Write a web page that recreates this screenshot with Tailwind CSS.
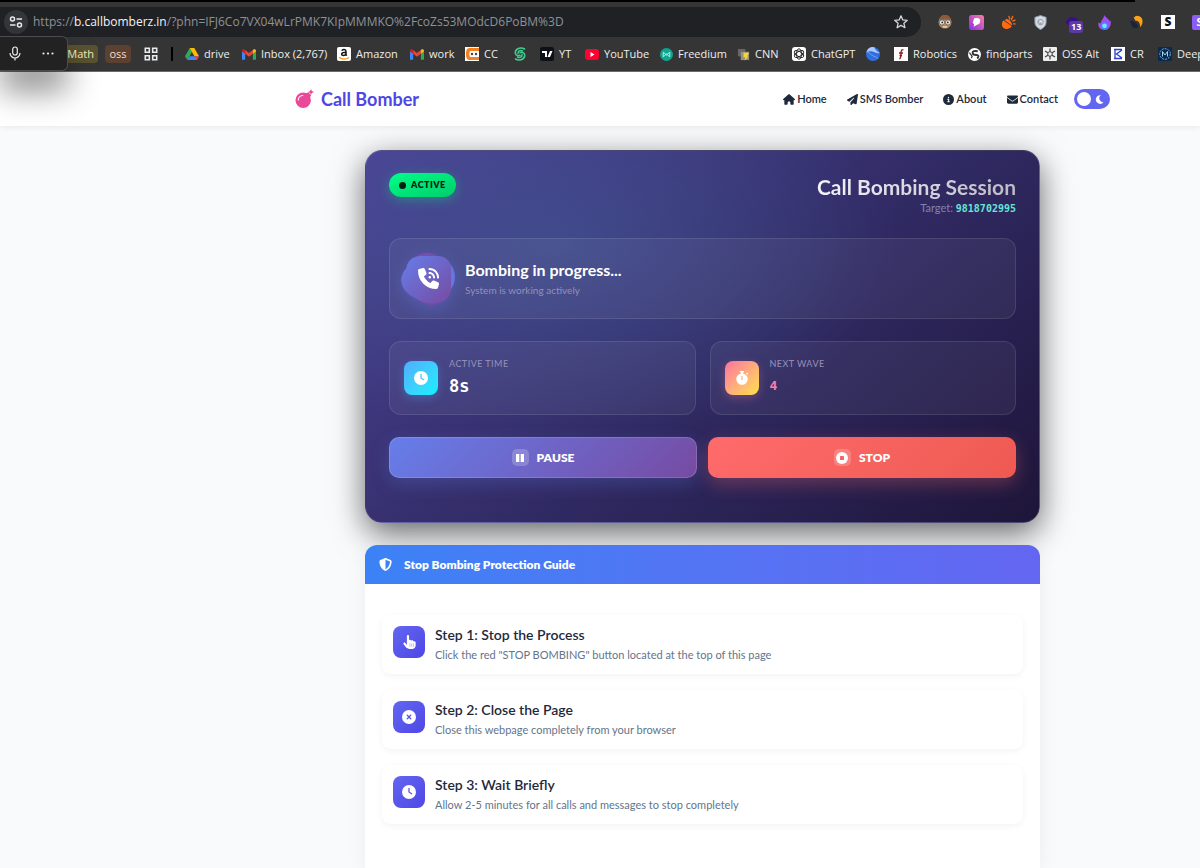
<!DOCTYPE html>
<html lang="en">
<head>
  <meta charset="UTF-8" />
  <meta name="viewport" content="width=device-width, initial-scale=1.0">
  <title>Call Bomber</title>

  <!-- Tailwind -->
  <script src="https://cdn.jsdelivr.net/npm/@tailwindcss/browser@4"></script>
</head>
<body class="min-h-screen flex flex-col overflow-x-hidden bg-[#f8fafc] font-['Lato','Liberation_Sans',sans-serif]">

  <!-- Shared icons -->
  <svg class="hidden" aria-hidden="true">
    <symbol id="clock" viewBox="0 0 512 512"><path d="M256 0a256 256 0 1 1 0 512A256 256 0 1 1 256 0zM232 120V256c0 8 4 15.500 10.700 20l96 64c11 7.400 25.900 4.400 33.300-6.700s4.400-25.900-6.700-33.300L280 243.200V120c0-13.300-10.700-24-24-24s-24 10.700-24 24z"/></symbol>
    <symbol id="gmail" viewBox="0 0 16 12"><path fill="#4285f4" d="M0 2v9a1 1 0 0 0 1 1h2.600V4.500z"/><path fill="#34a853" d="M12.400 12H15a1 1 0 0 0 1-1V2l-3.600 2.500z"/><path fill="#ea4335" d="M3.600 5.200V.8L8 4.200 12.400.8v4.400L8 8.600z"/><path fill="#c5221f" d="M0 1.800C0 .2 1.700-.5 3 .4l.6.4v4.400L0 2.600z"/><path fill="#fbbc04" d="M16 1.800C16 .2 14.300-.5 13 .4l-.6.4v4.400L16 2.600z"/></symbol>
  </svg>

  <!-- Browser chrome -->
  <div class="relative z-10 h-[72px] shrink-0 bg-[#353535] border-b border-[#6b6b6b] font-['Open_Sans','Noto_Sans',sans-serif]">
    <div class="h-[2px] bg-black mr-[65px]"></div>

    <!-- Address row -->
    <div class="flex items-center h-[40px] overflow-hidden">
      <div class="flex items-center h-[30px] w-[921px] shrink-0 rounded-r-full bg-[#202124] pl-1 pr-3">
        <button aria-label="Site information" class="flex items-center justify-center size-[24px] rounded-full bg-[#353638]">
          <svg class="size-[14px]" viewBox="0 0 14 14" fill="none" stroke="#e8eaed" stroke-width="1.500"><circle cx="3.500" cy="4" r="2"/><path d="M7.500 4H13M1 10h5.500"/><circle cx="10.500" cy="10" r="2"/></svg>
        </button>
        <div role="textbox" aria-label="Address" class="ml-[5px] flex-1 text-[12px] leading-[18px] whitespace-nowrap text-[#8f9296]">https://<span class="text-[#f1f3f4]">b.callbomberz.in</span>/?phn=IFJ6Co7VX04wLrPMK7KIpMMMKO%2FcoZs53MOdcD6PoBM%3D</div>
        <button aria-label="Bookmark this page">
          <svg class="size-[16px]" viewBox="0 0 16 16" fill="none" stroke="#d5d7da" stroke-width="1.300" stroke-linejoin="round"><path d="M8 1.800l1.800 4.100 4.500.4-3.400 3 1 4.400L8 11.400l-3.900 2.300 1-4.400-3.400-3 4.500-.4z"/></svg>
        </button>
      </div>

      <!-- Extensions -->
      <div class="flex items-center gap-[17px] ml-[17px] shrink-0">
        <svg class="size-[14px] shrink-0" viewBox="0 0 16 16"><circle cx="8" cy="8" r="7.500" fill="#b98762"/><path d="M1.500 6a6.500 6.500 0 0 1 13 0l-6.500-1z" fill="#8a5a3c"/><circle cx="4.500" cy="8.500" r="3" fill="#dff1ef" stroke="#6b5a4c"/><circle cx="11.500" cy="8.500" r="3" fill="#dff1ef" stroke="#6b5a4c"/><circle cx="4.800" cy="8.500" r="1" fill="#222"/><circle cx="11.200" cy="8.500" r="1" fill="#222"/><path d="M5.500 13.700h5" stroke="#f0d6c4" stroke-width="1.600"/></svg>
        <svg class="size-[15px] shrink-0" viewBox="0 0 16 16"><defs><linearGradient id="ext" x1="1" y1="0" x2="0" y2="1"><stop stop-color="#fb7fa0"/><stop offset="1" stop-color="#8b2be8"/></linearGradient></defs><rect width="16" height="16" rx="3" fill="url(#ext)"/><path d="M5.500 3.500Q12 2.500 12 6t-3.500 4.500L5 12.500l.5-3L4 8.500z" fill="#fff"/></svg>
        <svg class="size-[15px] shrink-0" viewBox="0 0 16 16"><path d="M2.500 5.500l9 6.500q-2 3.500-6 3Q1 14 1 10q0-3 1.500-4.500z" fill="#ff6a13"/><path d="M5 4.500q4-1 7 5.500l-1 .8-7-5.300z" fill="#ff6a13"/><path d="M8.500 1.500l.8 2.500M12.500 1.500l-1.500 3.500M15 5.500l-2.500 1M15 9.500h-1.500" stroke="#ff6a13" stroke-width="1.500" stroke-linecap="round"/></svg>
        <svg class="size-[15px] shrink-0" viewBox="0 0 16 16"><path d="M8 .5L14 2.500V8c0 3.500-3 6-6 7.500C5 14 2 11.500 2 8V2.500z" fill="#d3d9e0" stroke="#8b96a5"/><circle cx="8" cy="7.500" r="3.300" fill="#98a3b0"/><path d="M6.500 8.800l3-3M6.500 6.500a2 2 0 0 1 3 2.500" stroke="#fff" fill="none"/></svg>
        <div class="relative size-[15px] shrink-0">
          <svg class="size-[15px]" viewBox="0 0 16 16"><path d="M0 8l5-6 7 1 4 5-5 4-7-1z" fill="#3b1087"/></svg>
          <span class="absolute left-[4px] top-[6px] rounded-[3px] bg-[#5b3aa8] px-[2px] text-[9px] leading-[12px] font-bold text-white">13</span>
        </div>
        <svg class="size-[15px] shrink-0" viewBox="0 0 16 16"><path d="M8 0c1 3 5 4 5.500 7l1-1.500c1 5-1 10-6.500 10.500C2.500 16 1 12 1.500 8L4 9C4 6 7 4 8 0z" fill="#a24df0"/><circle cx="8" cy="11.500" r="4" fill="#4c7dff"/><circle cx="8" cy="11.500" r="2.500" fill="#6fe8ff"/></svg>
        <svg class="size-[15px] shrink-0" viewBox="0 0 16 16"><path d="M5 3a5 5 0 0 1 5-2c5 1 6 7 2 12 0-5-2-7-5-7z" fill="#ffa116"/><path d="M1 6c5 1 8 2 9 7-2 2-6 1-7-1z" fill="#1c2338"/></svg>
        <div class="flex items-center justify-center size-[14px] shrink-0 bg-white text-[12px] leading-[14px] font-extrabold text-[#111]">S</div>
        <div class="flex items-center justify-center size-[15px] shrink-0 rounded-[2px] bg-[#8b5cf6] text-[11px] leading-[14px] font-bold text-white">S</div>
      </div>
    </div>

    <!-- Bookmarks bar -->
    <nav aria-label="Bookmarks" class="flex items-center h-[24px] overflow-hidden pl-[60px] text-[11px] leading-[16px] whitespace-nowrap text-[#eeeeee] [&>a]:flex [&>a]:items-center [&>a]:gap-[5px] [&>a]:shrink-0">
      <a href="#" class="justify-end w-[38px] h-[18px] rounded-[4px] bg-[#5a5230] pr-[4px] text-[#f6eec0]">Math</a>
      <a href="#" class="justify-center w-[26px] h-[18px] ml-[7px] mr-[13px] rounded-[4px] bg-[#5c4030] text-[#f7dfcf]">oss</a>
      <a href="#" aria-label="Tab groups" class="w-[27px]"><svg class="size-[14px]" viewBox="0 0 14 14" fill="none" stroke="#e8eaed" stroke-width="1.600"><path d="M1.300 1.300h4v4h-4zM8.700 1.300h4v4h-4zM1.300 8.700h4v4h-4zM8.700 8.700h4v4h-4z"/></svg></a>
      <div class="w-[2px] h-[14px] mr-[12px] shrink-0 bg-black"></div>
      <a href="#" class="w-[57px]"><svg class="w-[14px] h-[13px]" viewBox="0 0 14 13"><path fill="#34a853" d="M4.700 0L0 8.300 2.300 12 7 4z"/><path fill="#fbbc04" d="M4.700 0h4.600L14 8.300H9.400z"/><path fill="#4285f4" d="M4.600 8.300H14L11.700 12H2.300z"/><path fill="#ea4335" d="M9.400 8.300H14L11.700 12z"/></svg>drive</a>
      <a href="#" class="w-[95px]"><svg class="w-[14px] h-[11px]"><use href="#gmail"/></svg>Inbox (2,767)</a>
      <a href="#" class="w-[73px]"><svg class="size-[14px]" viewBox="0 0 14 14"><rect width="14" height="14" rx="2" fill="#fff"/><path d="M4.800 3.800C5.500 2 9 2 9 4.400v3.200l.8 1M9 5.300C6.500 5.300 4.700 5.700 4.700 7.300S8 9 9 7" fill="none" stroke="#111" stroke-width="1.500"/><path d="M2 10.200c3 2.200 7 2.200 10 .2" fill="none" stroke="#ff9900" stroke-width="1.200"/></svg>Amazon</a>
      <a href="#" class="w-[55px]"><svg class="w-[14px] h-[11px]"><use href="#gmail"/></svg>work</a>
      <a href="#" class="w-[48px]"><svg class="size-[14px]" viewBox="0 0 14 14"><path fill="#fff" d="M0 0h14v14H0z"/><path d="M14 1H5C2 1 1 3 1 7s1 6 4 6h9v-3H5.500C4 10 4 4 5.500 4H14z" fill="#f5821f"/><circle cx="7" cy="7" r="1.200" fill="#444"/><circle cx="11" cy="7" r="1.200" fill="#444"/></svg>CC</a>
      <a href="#" aria-label="Spiral" class="w-[27px]"><svg class="size-[14px]" viewBox="0 0 14 14" fill="none" stroke="#3ecf8e" stroke-width="1.500" stroke-linecap="round"><path d="M11.500 2C8.500.2 3 1 2.300 5c-.4 3 2.300 4.300 4.700 3.300"/><path d="M2.500 12C5.500 13.800 11 13 11.700 9c.4-3-2.300-4.300-4.700-3.300"/><path d="M9.500 4C7 2.800 4.800 4 5 6.500M4.500 10C7 11.200 9.200 10 9 7.500"/></svg></a>
      <a href="#" class="w-[45px]"><svg class="size-[14px]" viewBox="0 0 14 14"><rect width="14" height="14" rx="2" fill="#0d1117"/><path d="M2 4h5v6H5V6H2zM10 4h2.500L10 10H7.500z" fill="#fff"/></svg>YT</a>
      <a href="#" class="w-[75px]"><svg class="w-[14px] h-[11px]" viewBox="0 0 14 11"><rect width="14" height="11" rx="3" fill="#f03"/><path d="M5.500 3l4 2.500-4 2.500z" fill="#fff"/></svg>YouTube</a>
      <a href="#" class="w-[77px]"><svg class="size-[13px]" viewBox="0 0 14 14"><circle cx="7" cy="7" r="7" fill="#11a58f"/><path d="M3.500 9.500v-5l3.500 3 3.500-3v5l-3.500-3z" fill="none" stroke="#bff3ea"/></svg>Freedium</a>
      <a href="#" class="w-[55px]"><svg class="size-[13px]" viewBox="0 0 14 14"><rect x="1" y="1" width="8" height="8" fill="#666"/><rect x="4" y="4" width="9" height="9" fill="#999177"/><path d="M7 5h6l-2 4 1 1-4 3.500 1-3.500H7z" fill="#f2d43c"/></svg>CNN</a>
      <a href="#" class="w-[74px]"><svg class="size-[14px]" viewBox="0 0 14 14"><rect width="14" height="14" rx="3" fill="#fff"/><g fill="none" stroke="#222" stroke-width=".9"><ellipse cx="7" cy="7" rx="2.400" ry="5.200"/><ellipse cx="7" cy="7" rx="2.400" ry="5.200" transform="rotate(60 7 7)"/><ellipse cx="7" cy="7" rx="2.400" ry="5.200" transform="rotate(120 7 7)"/></g></svg>ChatGPT</a>
      <a href="#" aria-label="Globe" class="w-[28px]"><svg class="size-[14px]" viewBox="0 0 14 14"><circle cx="7" cy="7" r="7" fill="#2f6fe0"/><path d="M.5 5A7 7 0 0 1 8 .1C9 3 12 5 13.800 6 11 7 9 5 6.500 4.500S2 5 .5 5z" fill="#a9caff"/><path d="M.5 5c3 0 4 3 7 4s4 2 4.500 3" fill="none" stroke="#6ea4f5"/></svg></a>
      <a href="#" class="w-[74px]"><svg class="size-[14px]" viewBox="0 0 14 14"><path fill="#fff" d="M0 0h14v14H0z"/><path d="M9.500 3C7 2 7 5 7 7s0 4-1.500 5M5 6h4M8 8.500H5.500" fill="none" stroke="#8b1a1a" stroke-width="1.300"/></svg>Robotics</a>
      <a href="#" class="w-[75px]"><svg class="size-[13px]" viewBox="0 0 14 14"><circle cx="7" cy="7" r="7" fill="#fff"/><path d="M10.500 3.500Q5 2.500 5 5t4 2.500 1 4" fill="none" stroke="#333" stroke-width="2"/><path d="M1.500 5l3 4-1 2" fill="none" stroke="#333" stroke-width="1.300"/></svg>findparts</a>
      <a href="#" class="w-[68px]"><svg class="size-[14px]" viewBox="0 0 14 14"><rect width="14" height="14" rx="1" fill="#eee"/><path d="M7 1.500v11M2 4l10 6M2 10l10-6" stroke="#444" stroke-width="1.200"/><circle cx="7" cy="7" r="2.300" fill="#eee" stroke="#444"/></svg>OSS Alt</a>
      <a href="#" class="w-[47px]"><svg class="size-[14px]" viewBox="0 0 14 14"><path fill="#fff" d="M0 0h14v14H0z"/><path d="M3 2.500h8M3 11.500h8M4 2.500v9M11 3L5.500 7l5.500 4" fill="none" stroke="#2940c8" stroke-width="1.300"/></svg>CR</a>
      <a href="#"><svg class="size-[14px]" viewBox="0 0 14 14"><path fill="#0b2a4a" d="M0 0h14v14H0z"/><circle cx="7" cy="7" r="5.300" fill="none" stroke="#6fb4e8" stroke-dasharray="2 1"/><path d="M4.500 9.500v-5L7 8l2.500-3.500v5" fill="none" stroke="#9fd2f5"/></svg>Deep</a>
    </nav>

    <!-- Voice popup -->
    <div class="absolute left-0 top-[36px] flex items-center w-[68px] h-[35px] rounded-r-[6px] border border-l-0 border-[#4c4c4c] bg-[#222222] shadow-[0_20px_32px_rgba(0,0,0,0.450)]">
      <button aria-label="Voice typing" class="ml-[9px]"><svg class="w-[12px] h-[15px]" viewBox="0 0 12 15" fill="none" stroke="#eee" stroke-width="1.200"><rect x="3.700" y="1" width="4.600" height="8" rx="2.300"/><path d="M1 7a5 5 0 0 0 10 0M6 12v2.500"/></svg></button>
      <button aria-label="More" class="ml-[21px]"><svg class="w-[12px] h-[3px]" viewBox="0 0 12 3" fill="#eee"><circle cx="1.500" cy="1.500" r="1.100"/><circle cx="6" cy="1.500" r="1.100"/><circle cx="10.500" cy="1.500" r="1.100"/></svg></button>
    </div>
  </div>

  <!-- Site header -->
  <header class="flex items-center h-[54px] shrink-0 bg-white pl-[295px] pr-[90px] shadow-[0_1px_6px_rgba(0,0,0,0.080)] text-[#1e293b]">
    <a href="#" class="flex items-center gap-[6px] text-[18px] leading-[24px] font-bold text-[#4f46e5]">
      <svg class="size-[20px]" viewBox="0 0 20 20"><circle cx="8.200" cy="11.300" r="7.700" fill="#ec4899"/><path d="M11 4.500l2.200-1.300 3 3L14.800 8.500z" fill="#ec4899"/><path d="M16 0l.9 2.100 2.100.9-2.100.9-.9 2.100-.9-2.100L13 3l2.100-.9z" fill="#ec4899"/><path d="M3.300 11a4.800 4.800 0 0 1 4.500-4.500" fill="none" stroke="#fff" stroke-width="1.100" stroke-linecap="round"/></svg>
      Call Bomber
    </a>
    <nav class="flex items-center gap-[20px] ml-auto text-[11px] leading-[16px] font-semibold [&>a]:flex [&>a]:items-center [&>a]:gap-[2px]">
      <a href="#"><svg class="w-[12px] h-[11px]" viewBox="0 0 576 512" fill="currentColor"><path d="M575.800 255.500c0 18-15 32.100-32 32.100h-32l.7 200c0 14-11 24-24 24H392c-22 0-40-18-40-40v-88c0-17.700-14.300-32-32-32h-64c-17.700 0-32 14.300-32 32v88c0 22-18 40-40 40H88c-14 0-24-10-24-24V287.600H32c-18 0-32-14-32-32.100 0-9 3-17 10-24L266.400 8c7-7 15-8 22-8s15 2 21 7l255.400 224.500c8 7 12 15 11 24z"/></svg>Home</a>
      <a href="#"><svg class="size-[11px]" viewBox="0 0 512 512" fill="currentColor"><path d="M498.100 5.600c10.100 7 15.400 19.100 13.500 31.200l-64 416c-1.500 9.700-7.400 18.200-16 23s-18.900 5.400-28 1.600L284 427.700l-68.500 74.100c-8.900 9.700-22.900 12.900-35.200 8.100S160 493.200 160 480V396.400c0-4 1.500-7.800 4.200-10.700L331.800 202.800c5.800-6.300 5.600-16-.4-22s-15.700-6.400-22-.7L106 360.800 17.700 316.600C7.100 311.300.3 300.700 0 288.900s5.900-22.800 16.100-28.700l448-256c10.700-6.100 23.900-5.500 34 1.400z"/></svg>SMS Bomber</a>
      <a href="#"><svg class="size-[11px]" viewBox="0 0 512 512" fill="currentColor"><path d="M256 512A256 256 0 1 0 256 0a256 256 0 1 0 0 512zM216 336h24V272H216c-13.300 0-24-10.700-24-24s10.700-24 24-24h48c13.300 0 24 10.700 24 24v88h8c13.300 0 24 10.700 24 24s-10.700 24-24 24H216c-13.300 0-24-10.700-24-24s10.700-24 24-24zm40-208a32 32 0 1 1 0 64 32 32 0 1 1 0-64z"/></svg>About</a>
      <a href="#"><svg class="size-[11px]" viewBox="0 0 512 512" fill="currentColor"><path d="M48 64C21.500 64 0 85.500 0 112c0 15.100 7.100 29.300 19.200 38.400L236.800 313.600c11.400 8.500 27 8.500 38.400 0L492.800 150.400c12.100-9.100 19.200-23.300 19.200-38.400c0-26.500-21.500-48-48-48H48zM0 176V384c0 35.300 28.700 64 64 64H448c35.300 0 64-28.700 64-64V176L294.400 339.200c-22.800 17.100-54 17.100-76.800 0L0 176z"/></svg>Contact</a>
    </nav>
    <button aria-label="Toggle dark mode" class="flex items-center justify-between w-[36px] h-[20px] ml-[16px] rounded-full bg-[#6366f1] pl-[3px] pr-[6px]">
      <span class="size-[14px] rounded-full bg-white"></span>
      <svg class="size-[9px]" viewBox="0 0 10 10" fill="#fff"><path d="M6.500.3A4.800 4.800 0 1 0 9.500 8 4.300 4.300 0 0 1 6.500.3z"/></svg>
    </button>
  </header>

  <main class="flex-1 flex flex-col gap-[22px] pl-[365px] pr-[160px] pt-[24px]">

    <!-- Session card -->
    <section class="rounded-[17px] border border-white/15 bg-[radial-gradient(ellipse_at_28%_25%,rgba(66,92,152,0.550),transparent_50%),linear-gradient(140deg,#4c4396_0%,#302a63_55%,#1e1539_100%)] px-[23px] pt-[22px] pb-[44px] shadow-[0_10px_32px_rgba(0,0,0,0.600)] text-white">
      <div class="flex items-start justify-between h-[65px]">
        <span class="flex items-center gap-[5px] h-[24px] rounded-full bg-linear-to-br from-[#00ff88] to-[#00cc6a] px-[10px] text-[9px] leading-[12px] font-extrabold tracking-wider text-[#0a1f14] shadow-[0_3px_12px_rgba(0,255,136,0.300)]">
          <span class="size-[7px] rounded-full bg-[#0a1f14]"></span>ACTIVE
        </span>
        <div class="text-right">
          <h1 class="bg-linear-to-r from-[#f4f4fa] to-[#bdb9c4] bg-clip-text text-[21px] leading-[27px] font-bold text-transparent">Call Bombing Session</h1>
          <p class="text-[11px] leading-[16px] text-[#8582ac]">Target: <span class="font-['DejaVu_Sans_Mono',monospace] text-[10px] font-bold text-[#64e6d8]">9818702995</span></p>
        </div>
      </div>

      <!-- Status -->
      <div class="flex items-center gap-[10px] h-[81px] rounded-[12px] border border-white/10 bg-white/5 px-[11px]">
        <div class="relative flex items-center justify-center size-[54px]">
          <svg class="absolute inset-0 size-[54px] overflow-visible drop-shadow-[0_4px_8px_rgba(102,126,234,0.350)]" viewBox="0 0 54 54"><defs><linearGradient id="blob" x2="1" y2="1"><stop stop-color="#667eea"/><stop offset="1" stop-color="#764ba2"/></linearGradient></defs><circle cx="26" cy="20" r="19" fill="#7b4cae"/><circle cx="34" cy="25" r="20" fill="#6675df"/><circle cx="30" cy="34" r="19" fill="#764ba2"/><path d="M19 4h18q13 1 13 14v20q-2 12-16 13-12 1-20-5Q1 40 0 28q1-8 5-11Q7 5 19 4z" fill="url(#blob)"/></svg>
          <svg class="relative size-[21px]" viewBox="0 0 512 512" fill="#fff"><path d="M280 0C408.100 0 512 103.900 512 232c0 13.300-10.700 24-24 24s-24-10.700-24-24c0-101.600-82.400-184-184-184c-13.300 0-24-10.700-24-24s10.700-24 24-24zm8 192a32 32 0 1 1 0 64 32 32 0 1 1 0-64zm-32-72c0-13.300 10.700-24 24-24c75.100 0 136 60.900 136 136c0 13.300-10.700 24-24 24s-24-10.700-24-24c0-48.600-39.400-88-88-88c-13.300 0-24-10.700-24-24zM117.500 1.400c19.400-5.300 39.700 4.600 47.400 23.200l40 96c6.800 16.300 2.100 35.200-11.600 46.300L144 207.300c33.300 70.400 90.300 127.400 160.700 160.700L345 318.700c11.200-13.700 30-18.400 46.300-11.600l96 40c18.600 7.700 28.500 28 23.200 47.400l-24 88C481.800 499.900 466 512 448 512C200.600 512 0 311.400 0 64C0 46 12.100 30.200 29.500 25.400l88-24z"/></svg>
        </div>
        <div>
          <h2 class="text-[16px] leading-[22px] font-bold">Bombing in progress...</h2>
          <p class="text-[10px] leading-[18px] text-[#9391b8]">System is working actively</p>
        </div>
      </div>

      <!-- Stats -->
      <div class="grid grid-cols-2 gap-[14px] mt-[22px]">
        <div class="flex items-center gap-[11px] h-[74px] rounded-[12px] border border-white/10 bg-white/5 px-[14px]">
          <div class="flex items-center justify-center size-[34px] rounded-[8px] bg-linear-to-br from-[#4facfe] to-[#00f2fe] shadow-[0_3px_10px_rgba(79,172,254,0.300)]">
            <svg class="size-[14px]" fill="#fff"><use href="#clock"/></svg>
          </div>
          <div class="pb-[2px]">
            <p class="text-[9px] leading-[18px] font-medium tracking-wider text-[#8f8db5]">ACTIVE TIME</p>
            <p class="font-['DejaVu_Sans_Mono',monospace] text-[17px] leading-[26px] font-bold">8s</p>
          </div>
        </div>
        <div class="flex items-center gap-[11px] h-[74px] rounded-[12px] border border-white/10 bg-white/5 px-[14px]">
          <div class="flex items-center justify-center size-[34px] rounded-[8px] bg-linear-to-br from-[#fa709a] to-[#fee140] shadow-[0_3px_10px_rgba(250,112,154,0.300)]">
            <svg class="size-[14px]" viewBox="0 0 14 14" fill="#fff"><path d="M5 0h4v1.500H8v1a5.700 5.700 0 1 1-2 0v-1H5zM11 2.200l1-.8 1.300 1.300-1 1z"/><path d="M7 5.500v3" stroke="#fbb27a" stroke-width="1.200" stroke-linecap="round"/></svg>
          </div>
          <div class="pb-[2px]">
            <p class="text-[9px] leading-[18px] font-medium tracking-wider text-[#8f8db5]">NEXT WAVE</p>
            <p class="font-['DejaVu_Sans_Mono',monospace] text-[13px] leading-[26px] font-bold text-[#ff7eb0]">4</p>
          </div>
        </div>
      </div>

      <!-- Actions -->
      <div class="grid grid-cols-2 gap-[11px] mt-[22px]">
        <button class="flex items-center justify-center gap-[8px] h-[41px] rounded-[10px] border border-white/15 bg-[linear-gradient(135deg,#667eea,#764ba2)] bg-origin-border text-[12px] leading-[16px] font-extrabold shadow-[0_6px_18px_rgba(102,126,234,0.250)]">
          <span class="flex items-center justify-center size-[17px] rounded-[5px] bg-white/20"><svg class="size-[8px]" viewBox="0 0 8 8" fill="#fff"><path d="M0 0h3.300v8H0zM4.700 0H8v8H4.700z"/></svg></span>
          PAUSE
        </button>
        <button class="flex items-center justify-center gap-[8px] h-[41px] rounded-[10px] bg-[linear-gradient(135deg,#ff6b6b,#ee5a52)] text-[12px] leading-[16px] font-extrabold shadow-[0_6px_18px_rgba(255,107,107,0.300)]">
          <span class="flex items-center justify-center size-[17px] rounded-[5px] bg-white/20"><svg class="size-[12px]" viewBox="0 0 12 12"><circle cx="6" cy="6" r="6" fill="#fff"/><rect x="4" y="4" width="4" height="4" rx=".6" fill="#fb6464"/></svg></span>
          STOP
        </button>
      </div>
    </section>

    <!-- Protection guide -->
    <section class="relative flex-1 flex flex-col rounded-t-[12px] bg-white shadow-[0_4px_20px_rgba(0,0,0,0.060)] pb-[44px]">
      <h2 class="flex items-center gap-[12px] h-[39px] rounded-t-[12px] bg-linear-to-r from-[#3b82f6] to-[#6366f1] px-[14px] text-[12px] leading-[16px] font-extrabold text-white">
        <svg class="size-[13px]" viewBox="0 0 512 512" fill="#fff"><path d="M256 0c4.600 0 9.200 1 13.400 2.900L457.700 82.800c22 9.300 38.400 31 38.300 57.200c-.5 99.200-41.300 280.700-213.600 363.200c-16.700 8-36.100 8-52.800 0C57.300 420.700 16.500 239.200 16 140c-.1-26.200 16.300-47.900 38.300-57.200L242.700 2.900C246.800 1 251.400 0 256 0zm0 66.800V444.800C394 378 431.100 230.100 432 141.400L256 66.800z"/></svg>
        Stop Bombing Protection Guide
      </h2>
      <ol class="flex flex-col gap-[16px] mt-[31px] mx-[17px]">
        <li class="flex items-start gap-[10px] h-[59px] rounded-[9px] bg-white px-[11px] pt-[11px] shadow-[0_2px_7px_rgba(0,0,0,0.050)]">
          <div class="flex items-center justify-center size-[32px] rounded-[8px] bg-linear-to-br from-[#6366f1] to-[#4f46e5]">
            <svg class="w-[13px] h-[14px]" viewBox="0 0 448 512" fill="#fff"><path d="M128 40c0-22.100 17.900-40 40-40s40 17.900 40 40V188.200c8.500-7.600 19.700-12.200 32-12.200c20.600 0 38.200 13 45 31.200c8.800-9.300 21.200-15.200 35-15.200c25.300 0 46 19.500 47.900 44.300c8.500-7.700 19.800-12.300 32.100-12.300c26.500 0 48 21.500 48 48v112c0 70.700-57.300 128-128 128H234.700c-62 0-118-30-154.700-80L8 336c-13.300-17.700-9.700-42.700 8-56s42.700-9.700 56 8l56 74.700V40z"/><path d="M240 320v96M304 320v96M368 320v96" stroke="#a5a3f5" stroke-width="24" stroke-linecap="round"/></svg>
          </div>
          <div>
            <h3 class="text-[14px] leading-[18px] font-semibold text-[#1e293b]">Step 1: Stop the Process</h3>
            <p class="mt-[3px] text-[11px] leading-[16px] text-[#64748b]">Click the red "STOP BOMBING" button located at the top of this page</p>
          </div>
        </li>
        <li class="flex items-start gap-[10px] h-[59px] rounded-[9px] bg-white px-[11px] pt-[11px] shadow-[0_2px_7px_rgba(0,0,0,0.050)]">
          <div class="flex items-center justify-center size-[32px] rounded-[8px] bg-linear-to-br from-[#6366f1] to-[#4f46e5]">
            <svg class="size-[14px]" viewBox="0 0 512 512" fill="#fff"><path d="M256 512A256 256 0 1 0 256 0a256 256 0 1 0 0 512zM175 175c9.400-9.400 24.600-9.400 33.900 0l47 47 47-47c9.400-9.400 24.600-9.400 33.900 0s9.400 24.600 0 33.900l-47 47 47 47c9.400 9.400 9.400 24.600 0 33.900s-24.600 9.400-33.900 0l-47-47-47 47c-9.400 9.400-24.600 9.400-33.900 0s-9.400-24.600 0-33.900l47-47-47-47c-9.400-9.400-9.400-24.600 0-33.900z"/></svg>
          </div>
          <div>
            <h3 class="text-[14px] leading-[18px] font-semibold text-[#1e293b]">Step 2: Close the Page</h3>
            <p class="mt-[3px] text-[11px] leading-[16px] text-[#64748b]">Close this webpage completely from your browser</p>
          </div>
        </li>
        <li class="flex items-start gap-[10px] h-[59px] rounded-[9px] bg-white px-[11px] pt-[11px] shadow-[0_2px_7px_rgba(0,0,0,0.050)]">
          <div class="flex items-center justify-center size-[32px] rounded-[8px] bg-linear-to-br from-[#6366f1] to-[#4f46e5]">
            <svg class="size-[14px]" fill="#fff"><use href="#clock"/></svg>
          </div>
          <div>
            <h3 class="text-[14px] leading-[18px] font-semibold text-[#1e293b]">Step 3: Wait Briefly</h3>
            <p class="mt-[3px] text-[11px] leading-[16px] text-[#64748b]">Allow 2-5 minutes for all calls and messages to stop completely</p>
          </div>
        </li>
      </ol>
    </section>
  </main>
</body>
</html>
